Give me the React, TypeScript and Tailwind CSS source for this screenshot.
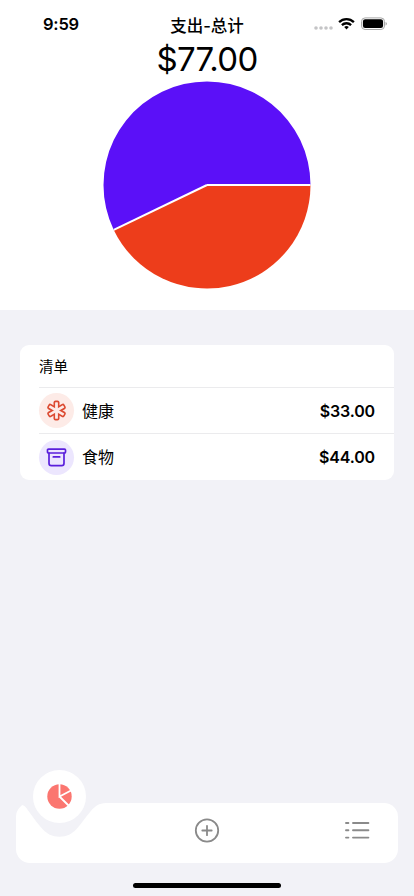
const latin = "font-[Inter,'Noto_Sans_CJK_SC',sans-serif]";

const slices = [
  { name: '健康', amount: 33, color: '#ed3d1b' },
  { name: '食物', amount: 44, color: '#5b10f8' },
];

const total = slices.reduce((sum, s) => sum + s.amount, 0);
const money = (n: number) => `$${n.toFixed(2)}`;

const PieChart = () => {
  const r = 103.5;
  let angle = 0;

  const paths = slices.map((s) => {
    const start = angle;
    angle += (s.amount / total) * Math.PI * 2;
    const large = angle - start > Math.PI ? 1 : 0;
    const x1 = r * Math.cos(start);
    const y1 = r * Math.sin(start);
    const x2 = r * Math.cos(angle);
    const y2 = r * Math.sin(angle);
    return { ...s, x1, y1, d: `M0 0L${x1} ${y1}A${r} ${r} 0 ${large} 1 ${x2} ${y2}Z` };
  });

  return (
    <svg width="208" height="208" viewBox="-104 -104 208 208" className="mx-auto">
      {paths.map((p) => (
        <path key={p.name} d={p.d} fill={p.color} />
      ))}
      {paths.map((p) => (
        <line key={p.name} x1="0" y1="0" x2={p.x1} y2={p.y1} stroke="#fff" strokeWidth="2" />
      ))}
    </svg>
  );
};

const HealthIcon = () => (
  <svg width="23" height="23" viewBox="-11.5 -11.5 23 23">
    <g fill="#dc4a31">
      <rect x="-3" y="-9.9" width="6" height="19.8" rx="2" />
      <rect x="-3" y="-9.9" width="6" height="19.8" rx="2" transform="rotate(60)" />
      <rect x="-3" y="-9.9" width="6" height="19.8" rx="2" transform="rotate(-60)" />
    </g>
    <g fill="#fdebe7">
      <rect x="-1.4" y="-8.3" width="2.8" height="16.6" rx="0.6" />
      <rect x="-1.4" y="-8.3" width="2.8" height="16.6" rx="0.6" transform="rotate(60)" />
      <rect x="-1.4" y="-8.3" width="2.8" height="16.6" rx="0.6" transform="rotate(-60)" />
    </g>
  </svg>
);

const FoodIcon = () => (
  <svg width="23" height="23" viewBox="-0.5 -0.5 23 23" fill="none" stroke="#5a1fdc" strokeWidth="1.7" strokeLinecap="round">
    <rect x="2" y="2.6" width="18" height="3.9" rx="1" />
    <path d="M3.5 6.6v10.2a2.4 2.4 0 0 0 2.4 2.4h10.2a2.4 2.4 0 0 0 2.4-2.4V6.6" />
    <path d="M7.8 10.4h6.4" />
  </svg>
);

const StatusBar = () => (
  <header className="grid h-[41px] grid-cols-[1fr_auto_1fr] items-start pt-[15px] pr-[27px] pl-[43px]">
    <span className="text-[16.5px] leading-[19px] font-semibold tracking-[-0.2px]">9:59</span>
    <h1 className="mt-px -ml-4 text-center text-[16.5px] leading-[21px] font-medium">支出-总计</h1>
    <div className="flex items-center justify-end gap-[5px]">
      <svg width="20" height="18" viewBox="0 0 20 18" fill="#c4c4c6">
        <circle cx="3" cy="13" r="1.8" />
        <circle cx="8" cy="13" r="1.8" />
        <circle cx="13" cy="13" r="1.8" />
        <circle cx="18" cy="13" r="1.8" />
      </svg>
      <svg width="17" height="18" viewBox="0 0 17 18" fill="none" stroke="#000" strokeWidth="2.3">
        <path d="M1.1 7.1a10.6 10.6 0 0 1 14.8 0" />
        <path d="M3.9 10.1a6.7 6.7 0 0 1 9.2 0" />
        <path d="M8.5 14.4L6.2 12a3.3 3.3 0 0 1 4.6 0Z" fill="#000" stroke="none" />
      </svg>
      <svg width="27" height="18" viewBox="0 0 27 18">
        <rect x="1.5" y="2.9" width="23" height="11.6" rx="3.6" fill="none" stroke="#a8a8a8" />
        <rect x="2.9" y="4.3" width="20.2" height="8.8" rx="2.3" />
        <path d="M25.6 7v3.6c.7-.3 1.2-1 1.2-1.8s-.5-1.5-1.2-1.8Z" fill="#999" />
      </svg>
    </div>
  </header>
);

const BillList = () => (
  <section className="mx-5 mt-[35px] h-[135px] rounded-[9px] bg-white pl-[19px]">
    <h2 className="flex h-[41.5px] items-center pt-[2px] text-[14.5px]">清单</h2>
    {slices.map((s, i) => (
      <div key={s.name} className="flex h-[46.5px] items-center border-t border-[#ebebed] pt-px pr-[19px]">
        <span className={`flex size-[35px] items-center justify-center rounded-full ${i === 0 ? 'bg-[#fdebe7]' : 'bg-[#ece6fe]'}`}>
          {i === 0 ? <HealthIcon /> : <FoodIcon />}
        </span>
        <span className="ml-2 text-[16px]">{s.name}</span>
        <span className="ml-auto text-[16px] font-semibold tracking-[-0.15px]">{money(s.amount)}</span>
      </div>
    ))}
  </section>
);

const TabBar = () => (
  <nav className="relative mx-4 mt-auto mb-[20px] flex h-[60px] items-center rounded-[14px] bg-white">
    {/* dip under the active tab */}
    <svg className="absolute top-[-1px] left-[-1px]" width="92" height="40" viewBox="-1 -1 92 40" fill="#f2f2f7">
      <path d="M-1 -1V12H0C0 6 2 2 5.5 2C8.5 2 10 4.5 12.5 8C17 14 21 20 26 25.5C31 31 36 33.7 43.5 33.7C51 33.7 56 31 61 25.5C66 20 70 13.5 74.5 8.5C79 3 83 0.3 90 0V-1Z" />
    </svg>
    <button className="absolute top-[-33px] left-[17px] flex size-[53px] items-center justify-center rounded-full bg-white">
      <svg width="26" height="26" viewBox="-12.5 -12.5 26 26">
        <circle r="12.2" fill="#fb7670" />
        <path d="M0 -13V0L12 -6.2M0 0L9.5 9.5" fill="none" stroke="#fff" strokeWidth="1.8" />
      </svg>
    </button>
    <button className="mx-auto -translate-y-[2.5px]">
      <svg width="26" height="26" viewBox="-13 -13 26 26" fill="none" stroke="#8a8a8a" strokeWidth="1.8" strokeLinecap="round">
        <circle r="11.2" />
        <path d="M-4.7 0H4.7M0 -4.7V4.7" />
      </svg>
    </button>
    <button className="absolute top-[17px] right-[28px]">
      <svg width="26" height="20" viewBox="0 0 26 20" fill="none" stroke="#8a8a8a" strokeWidth="1.9" strokeLinecap="round">
        <path d="M2 3h2.4M9 3h15.4M2 10.3h2.4M9 10.3h15.4M2 17.6h2.4M9 17.6h15.4" />
      </svg>
    </button>
  </nav>
);

export default function App() {
  return (
    <main className={`flex h-[896px] w-[414px] flex-col overflow-hidden bg-[#f2f2f7] text-black ${latin}`}>
      <div className="h-[310px] bg-white">
        <StatusBar />
        <p className="h-[40px] text-center text-[33px] leading-[37px] tracking-[-0.7px]">{money(total)}</p>
        <PieChart />
      </div>
      <BillList />
      <TabBar />
      <div className="mx-auto mb-[8px] h-[5px] w-[148px] shrink-0 rounded-full bg-black" />
    </main>
  );
}
